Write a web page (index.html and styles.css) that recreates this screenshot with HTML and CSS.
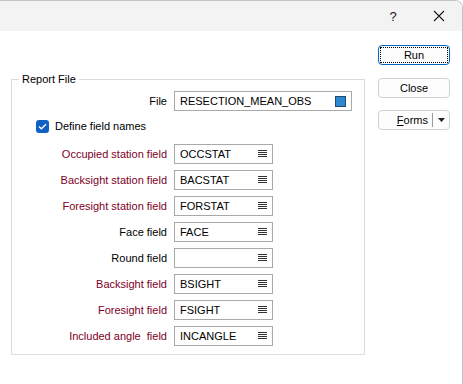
FILE: index.html
```html
<!DOCTYPE html>
<html>
<head>
<meta charset="utf-8">
<link rel="stylesheet" href="styles.css">
</head>
<body>
<div class="window">
  <div class="titlebar">
    <span class="tb-help">?</span>
    <span class="tb-close">
      <svg width="12" height="12" viewBox="0 0 12 12"><path d="M1 1L11 11M11 1L1 11" stroke="#1a1a1a" stroke-width="1.1" fill="none"/></svg>
    </span>
  </div>
  <div class="content">
    <div class="main">
      <div class="group">
        <div class="legend">Report File</div>
        <div class="row">
          <label class="lbl">File</label>
          <div class="input wide"><span class="val">RESECTION_MEAN_OBS</span><span class="filebox"></span></div>
        </div>
        <div class="check-row">
          <span class="checkbox"><svg width="9" height="7" viewBox="0 0 9 7"><path d="M1 3.5L3.4 5.8L8 1.2" stroke="#fff" stroke-width="1.3" fill="none"/></svg></span>
          <span>Define field names</span>
        </div>
        <div class="fields">
          <div class="row"><label class="lbl req">Occupied station field</label><div class="input"><span class="val">OCCSTAT</span><svg class="lines" width="9" height="8" viewBox="0 0 9 8"><path d="M0 0.5H9M0 2.5H9M0 4.5H9M0 6.5H9" stroke="#333" stroke-width="1"/></svg></div></div>
          <div class="row"><label class="lbl req">Backsight station field</label><div class="input"><span class="val">BACSTAT</span><svg class="lines" width="9" height="8" viewBox="0 0 9 8"><path d="M0 0.5H9M0 2.5H9M0 4.5H9M0 6.5H9" stroke="#333" stroke-width="1"/></svg></div></div>
          <div class="row"><label class="lbl req">Foresight station field</label><div class="input"><span class="val">FORSTAT</span><svg class="lines" width="9" height="8" viewBox="0 0 9 8"><path d="M0 0.5H9M0 2.5H9M0 4.5H9M0 6.5H9" stroke="#333" stroke-width="1"/></svg></div></div>
          <div class="row"><label class="lbl">Face field</label><div class="input"><span class="val">FACE</span><svg class="lines" width="9" height="8" viewBox="0 0 9 8"><path d="M0 0.5H9M0 2.5H9M0 4.5H9M0 6.5H9" stroke="#333" stroke-width="1"/></svg></div></div>
          <div class="row"><label class="lbl">Round field</label><div class="input"><span class="val"></span><svg class="lines" width="9" height="8" viewBox="0 0 9 8"><path d="M0 0.5H9M0 2.5H9M0 4.5H9M0 6.5H9" stroke="#333" stroke-width="1"/></svg></div></div>
          <div class="row"><label class="lbl req">Backsight field</label><div class="input"><span class="val">BSIGHT</span><svg class="lines" width="9" height="8" viewBox="0 0 9 8"><path d="M0 0.5H9M0 2.5H9M0 4.5H9M0 6.5H9" stroke="#333" stroke-width="1"/></svg></div></div>
          <div class="row"><label class="lbl req">Foresight field</label><div class="input"><span class="val">FSIGHT</span><svg class="lines" width="9" height="8" viewBox="0 0 9 8"><path d="M0 0.5H9M0 2.5H9M0 4.5H9M0 6.5H9" stroke="#333" stroke-width="1"/></svg></div></div>
          <div class="row"><label class="lbl req">Included angle&nbsp; field</label><div class="input"><span class="val">INCANGLE</span><svg class="lines" width="9" height="8" viewBox="0 0 9 8"><path d="M0 0.5H9M0 2.5H9M0 4.5H9M0 6.5H9" stroke="#333" stroke-width="1"/></svg></div></div>
        </div>
      </div>
    </div>
    <div class="side">
      <div class="btn default"><span class="focus">Run</span></div>
      <div class="btn close-btn">Close</div>
      <div class="btn split"><span class="split-main"><u>F</u>orms</span><span class="split-div"></span><span class="split-arrow"><svg width="7" height="4" viewBox="0 0 7 4"><path d="M0 0H7L3.5 4Z" fill="#222"/></svg></span></div>
    </div>
  </div>
</div>
</body>
</html>
```

FILE: styles.css
```css
html, body {
  margin: 0;
  padding: 0;
  background: #ffffff;
}
body {
  width: 463px;
  height: 384px;
  overflow: hidden;
  font-family: "Liberation Sans", Arial, sans-serif;
  font-size: 11px;
  color: #000;
}
.window {
  box-sizing: border-box;
  width: 463px;
  height: 384px;
  border-top: 1px solid #c4c4c4;
  border-right: 1px solid #c4c4c4;
  border-top-right-radius: 8px;
  overflow: hidden;
  background: #fff;
}
.titlebar {
  height: 30px;
  background: #f3f3f3;
  display: flex;
  align-items: center;
  justify-content: flex-end;
}
.tb-help {
  width: 46px;
  text-align: center;
  font-family: "Liberation Sans", sans-serif;
  font-size: 13px;
  color: #1a1a1a;
}
.tb-close {
  width: 46px;
  display: flex;
  justify-content: center;
  align-items: center;
}
.content {
  display: flex;
  align-items: flex-start;
}
.main {
  padding-left: 11px;
  padding-top: 48px;
}
.group {
  position: relative;
  box-sizing: border-box;
  width: 354px;
  border: 1px solid #dcdcdc;
  padding: 11px 0 8px 0;
}
.legend {
  position: absolute;
  top: -8px;
  left: 7px;
  padding: 0 3px;
  background: #fff;
  line-height: 14px;
  color: #000;
}
.row {
  display: flex;
  align-items: center;
  height: 20px;
}
.lbl {
  width: 155px;
  text-align: right;
  padding-right: 7px;
  white-space: nowrap;
  color: #000;
}
.lbl.req {
  color: #7d0026;
}
.input {
  box-sizing: border-box;
  width: 99px;
  height: 20px;
  border: 1px solid #a9a9a9;
  display: flex;
  align-items: center;
  justify-content: space-between;
  padding: 0 5px 0 5px;
  background: #fff;
}
.input.wide {
  width: 178px;
  padding-right: 5px;
}
.val {
  white-space: nowrap;
}
.filebox {
  box-sizing: border-box;
  width: 11px;
  height: 11px;
  background: #2b88d0;
  border: 1px solid #24496a;
}
.lines {
  display: block;
}
.check-row {
  display: flex;
  align-items: center;
  height: 18px;
  margin-top: 6px;
  padding-left: 24px;
}
.checkbox {
  box-sizing: border-box;
  width: 13px;
  height: 13px;
  border-radius: 3px;
  background: #0f62c3;
  display: flex;
  align-items: center;
  justify-content: center;
  margin-right: 6px;
}
.fields {
  margin-top: 9px;
  display: flex;
  flex-direction: column;
  gap: 6px;
}
.side {
  margin-left: 13px;
  padding-top: 14px;
  display: flex;
  flex-direction: column;
}
.btn {
  box-sizing: border-box;
  width: 72px;
  height: 20px;
  border: 1px solid #d0d0d0;
  border-radius: 4px;
  background: #fdfdfd;
  display: flex;
  align-items: center;
  justify-content: center;
  color: #000;
}
.btn.default {
  border-color: #0067c0;
  padding: 1px;
}
.focus {
  box-sizing: border-box;
  width: 100%;
  height: 100%;
  border: 1px dotted #000;
  display: flex;
  align-items: center;
  justify-content: center;
}
.close-btn {
  margin-top: 13px;
}
.split {
  margin-top: 12px;
  justify-content: flex-end;
}
.split-main {
  padding-right: 4px;
}
.split-div {
  width: 1px;
  height: 14px;
  background: #9a9a9a;
}
.split-arrow {
  width: 16px;
  display: flex;
  justify-content: center;
  align-items: center;
}
```
